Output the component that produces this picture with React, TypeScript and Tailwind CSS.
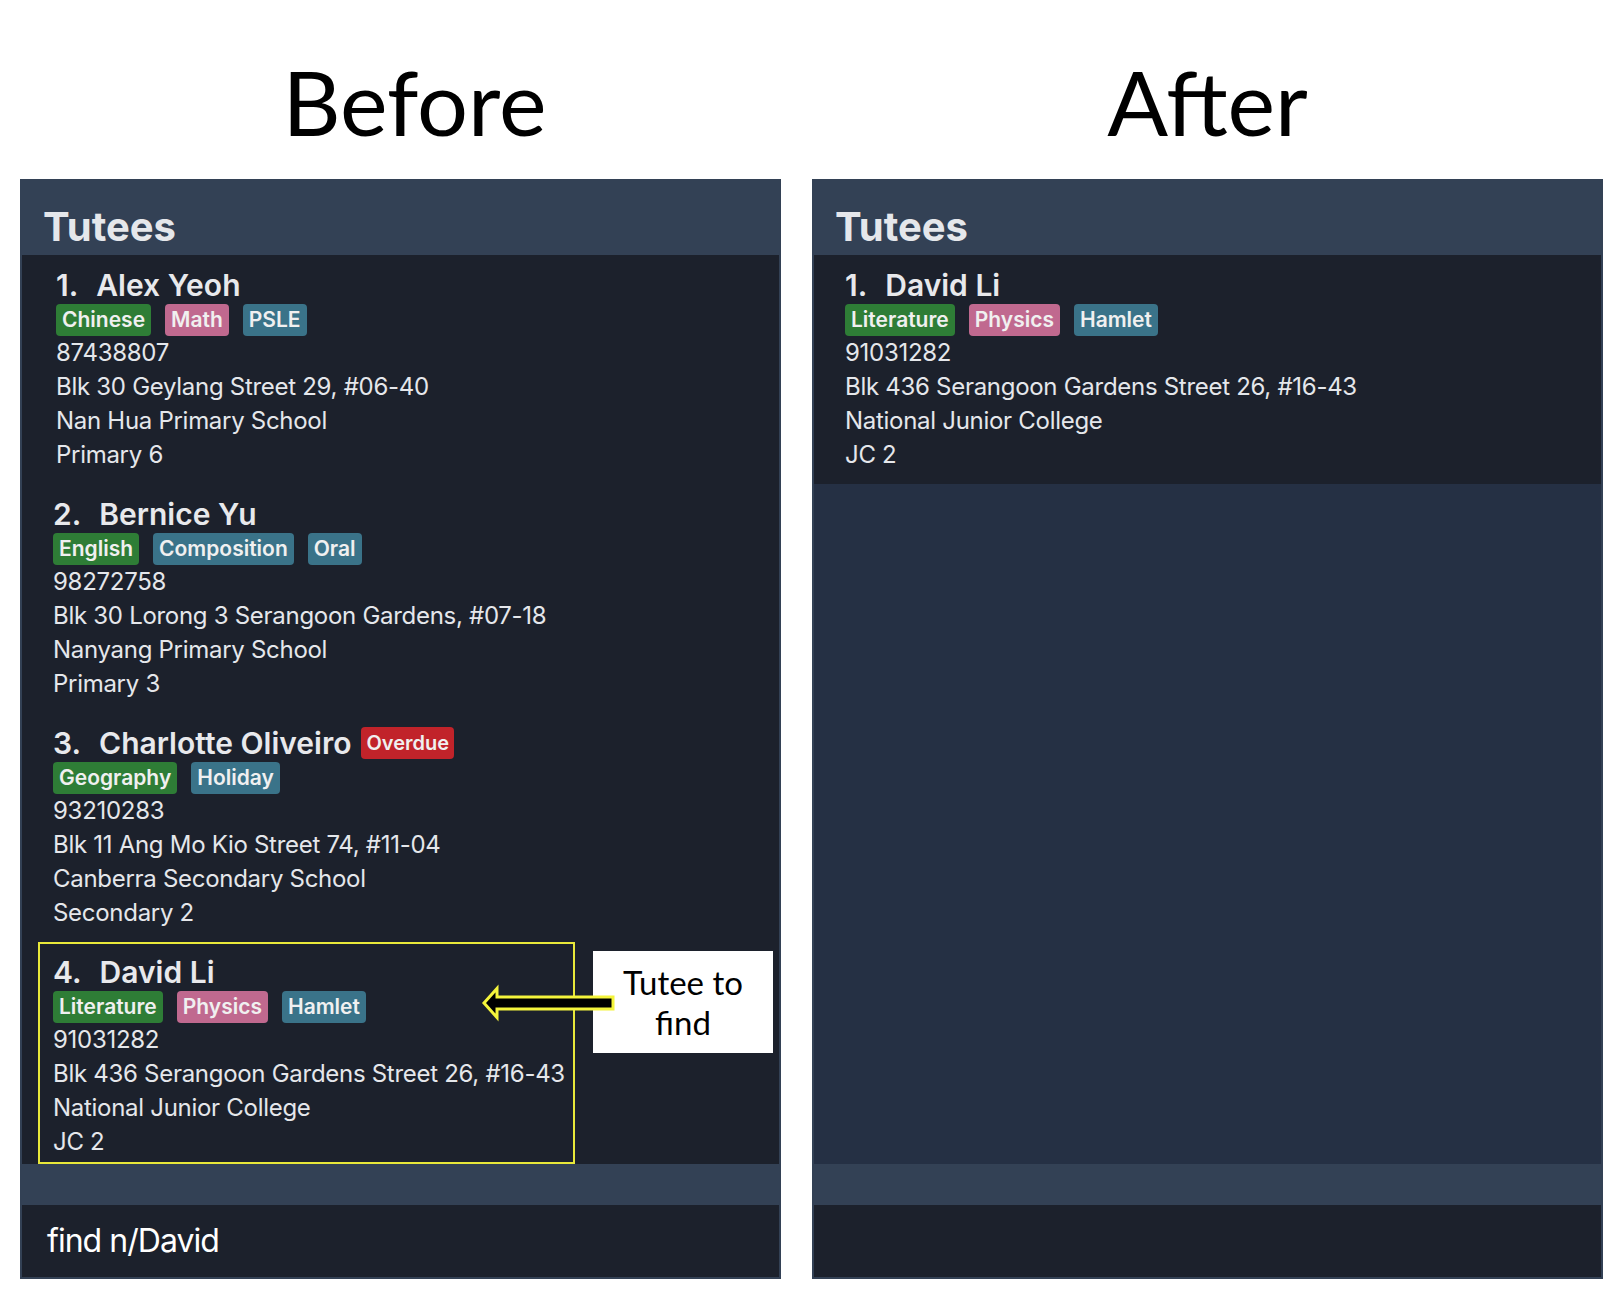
type Tag = { label: string; tone: "green" | "pink" | "teal" };

type Tutee = {
  name: string;
  overdue?: boolean;
  tags: Tag[];
  phone: string;
  address: string;
  school: string;
  level: string;
};

const tutees: Tutee[] = [
  {
    name: "Alex Yeoh",
    tags: [
      { label: "Chinese", tone: "green" },
      { label: "Math", tone: "pink" },
      { label: "PSLE", tone: "teal" },
    ],
    phone: "87438807",
    address: "Blk 30 Geylang Street 29, #06-40",
    school: "Nan Hua Primary School",
    level: "Primary 6",
  },
  {
    name: "Bernice Yu",
    tags: [
      { label: "English", tone: "green" },
      { label: "Composition", tone: "teal" },
      { label: "Oral", tone: "teal" },
    ],
    phone: "98272758",
    address: "Blk 30 Lorong 3 Serangoon Gardens, #07-18",
    school: "Nanyang Primary School",
    level: "Primary 3",
  },
  {
    name: "Charlotte Oliveiro",
    overdue: true,
    tags: [
      { label: "Geography", tone: "green" },
      { label: "Holiday", tone: "teal" },
    ],
    phone: "93210283",
    address: "Blk 11 Ang Mo Kio Street 74, #11-04",
    school: "Canberra Secondary School",
    level: "Secondary 2",
  },
  {
    name: "David Li",
    tags: [
      { label: "Literature", tone: "green" },
      { label: "Physics", tone: "pink" },
      { label: "Hamlet", tone: "teal" },
    ],
    phone: "91031282",
    address: "Blk 436 Serangoon Gardens Street 26, #16-43",
    school: "National Junior College",
    level: "JC 2",
  },
];

const toneClass = {
  green: "bg-[#2e7d36]",
  pink: "bg-[#c0698f]",
  teal: "bg-[#3a7389]",
};

function Chip({ label, className }: { label: string; className: string }) {
  return (
    <span
      className={`h-8 px-[6px] rounded-[4px] flex items-center text-[21px] font-semibold text-[#f0f0f0] ${className}`}
    >
      {label}
    </span>
  );
}

function TuteeCard({ index, tutee, first }: { index: number; tutee: Tutee; first?: boolean }) {
  return (
    <div className={`bg-[#1c212c] pt-3 pb-3 pr-4 shrink-0 ${first ? "pl-[34px]" : "pl-[31px]"}`}>
      <div className="h-9 flex items-center text-[30px] font-semibold text-[#e8e9ec]">
        <span className="mr-[18px]">{index}.</span>
        <span>{tutee.name}</span>
        {tutee.overdue && (
          <span className="ml-[10px] h-8 px-[5px] rounded-[4px] flex items-center text-[20px] font-semibold text-[#f0f0f0] bg-[#c1232a]">
            Overdue
          </span>
        )}
      </div>
      <div className="mt-[1px] flex gap-[14px]">
        {tutee.tags.map((t) => (
          <Chip key={t.label} label={t.label} className={toneClass[t.tone]} />
        ))}
      </div>
      <div className="text-[24px] leading-[34px] tracking-[-0.012em] text-[#e5e7eb]">
        <div>{tutee.phone}</div>
        <div>{tutee.address}</div>
        <div>{tutee.school}</div>
        <div>{tutee.level}</div>
      </div>
    </div>
  );
}

function Panel({ list, command, annotate }: { list: Tutee[]; command: string; annotate?: boolean }) {
  return (
    <div className="h-[1100px] flex flex-col border-x-2 border-b-2 border-[#334155]">
      <div className="h-[76px] shrink-0 bg-[#334155] pt-6 pl-[21px]">
        <h2 className="text-[40px] leading-[48px] font-bold text-[#e5e7eb]">Tutees</h2>
      </div>
      <div className="flex-1 overflow-hidden bg-[#253044] flex flex-col">
        {list.map((t, i) => (
          <div key={t.name} className="relative">
            <TuteeCard index={i + 1} tutee={t} first={annotate && i === 0} />
            {annotate && i === list.length - 1 && (
              <>
                <div className="absolute left-4 top-0 w-[537px] h-[222px] border-2 border-[#e8e83a]" />
                <div className="absolute left-[571px] top-[9px] w-[180px] h-[102px] bg-white flex flex-col items-center justify-center [font-family:Lato,sans-serif] text-[33px] leading-[40px] text-black">
                  <span>Tutee to</span>
                  <span>find</span>
                </div>
                <svg
                  className="absolute left-[454px] top-[40px]"
                  width="144"
                  height="42"
                  viewBox="0 0 144 42"
                >
                  <path
                    d="M8 21 L21 6.5 L21 15 L137 15 L137 27 L21 27 L21 35.5 Z"
                    fill="#000"
                    stroke="#f4f43c"
                    strokeWidth="3"
                  />
                </svg>
              </>
            )}
          </div>
        ))}
      </div>
      <div className="h-[41px] shrink-0 bg-[#334155]" />
      <div className="h-[72px] shrink-0 bg-[#1c212c] flex items-center pl-[25px]">
        <span className="text-[32px] tracking-[-0.03em] text-white">{command}</span>
      </div>
    </div>
  );
}

export default function App() {
  return (
    <div className="w-[1624px] h-[1300px] bg-white flex gap-[31px] pl-5 [font-family:Inter,'Noto_Sans',sans-serif]">
      <div className="w-[761px] flex flex-col">
        <div className="h-[179px] pt-[56px] pl-[28px] text-center [font-family:Lato,sans-serif] text-[90px] leading-none text-black">
          Before
        </div>
        <Panel list={tutees} command="find n/David" annotate />
      </div>
      <div className="w-[791px] flex flex-col">
        <div className="h-[179px] pt-[56px] text-center [font-family:Lato,sans-serif] text-[90px] leading-none text-black">
          After
        </div>
        <Panel list={tutees.slice(3)} command="" />
      </div>
    </div>
  );
}
